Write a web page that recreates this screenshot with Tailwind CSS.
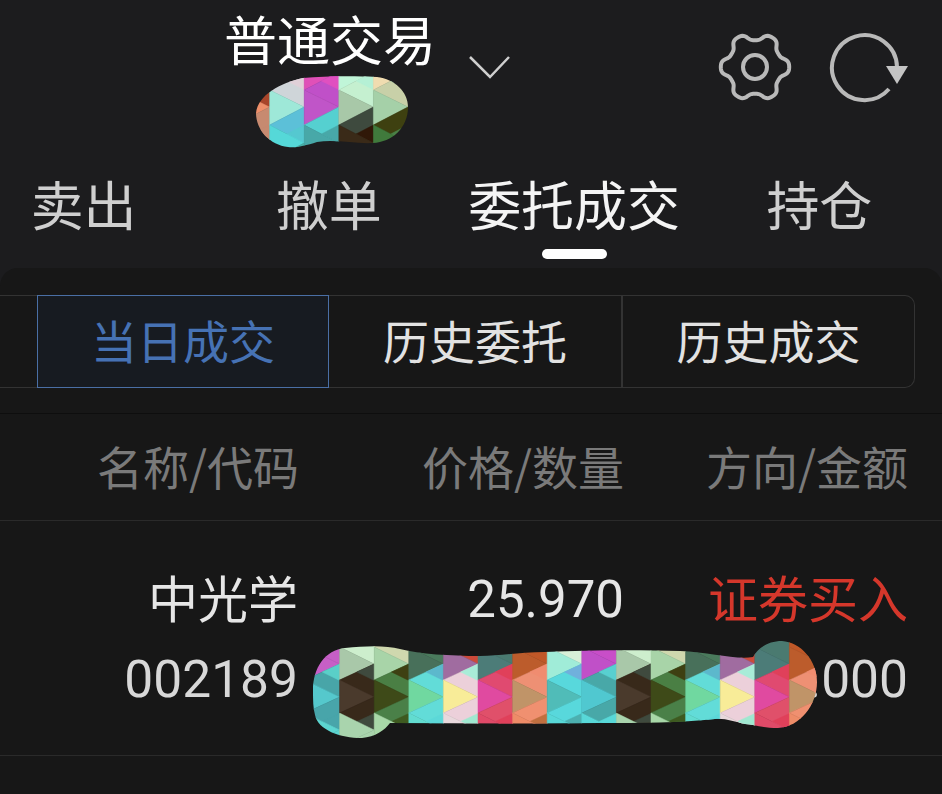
<!DOCTYPE html>
<html lang="zh">
<head>
  <meta charset="UTF-8">
  <title>普通交易</title>
  <script src="https://cdn.jsdelivr.net/npm/@tailwindcss/browser@4"></script>
</head>
<body class="relative w-[942px] h-[794px] overflow-hidden bg-[#1c1c1e] font-['Noto_Sans_CJK_SC','Noto_Sans',sans-serif]">

  <!-- HEADER -->
  <header class="flex h-[160px]">
    <div class="ml-[224px] mt-[7px] text-[53px] leading-[62px] text-white">普通交易</div>
    <svg class="ml-[32px] mt-[55px]" width="42" height="24" viewBox="0 0 42 24" fill="none" stroke="#cfcfcf" stroke-width="2.5"><path d="M2 2l20 20L41 2"/></svg>
    <svg class="ml-[206px] mt-[30px]" width="78" height="74" viewBox="-39 -37 78 74" fill="none" stroke="#b9b9b9" stroke-width="4">
      <path id="gear"/>
      <circle r="12"/>
    </svg>
    <svg class="ml-[33px] mt-[30px]" width="82" height="76" viewBox="828 29 82 76" fill="none">
      <path d="M898 66A32.5 32.5 0 1 0 890 88" stroke="#b9b9b9" stroke-width="4"/>
      <path d="M887 65H909L898 83Z" fill="#c4c4c4"/>
    </svg>
  </header>

  <!-- TABS -->
  <nav class="relative flex -ml-[39px] h-[108px] text-[53px] text-[#cfcfcf]">
    <div class="w-[245.3px] pt-[12px] leading-[62px] text-center">卖出</div>
    <div class="w-[245.3px] pt-[12px] leading-[62px] text-center">撤单</div>
    <div class="w-[245.3px] pt-[12px] leading-[62px] text-center text-[#f4f4f4] whitespace-nowrap">委托成交</div>
    <div class="w-[245.3px] pt-[12px] leading-[62px] text-center">持仓</div>
    <span class="absolute left-[581px] top-[89px] w-[65px] h-[10px] rounded-full bg-white"></span>
  </nav>

  <!-- PANEL -->
  <main class="h-[526px] bg-[#171717] rounded-t-[18px]">
    <div class="h-[146px] pt-[27px] border-b border-[#0e0e0e]">
      <div class="flex h-[93px] w-[915px] rounded-r-[10px] border border-l-0 border-[#333333] text-[46px] text-[#e2e2e2]">
        <div class="w-[37px]"></div>
        <div class="w-[292px] -my-px border border-[#4a6fa5] bg-[#171b21] text-[#4672b4] flex items-center justify-center pb-[4px]">当日成交</div>
        <div class="w-[292px] flex items-center justify-center pb-[4px]">历史委托</div>
        <div class="flex-1 border-l-2 border-[#333333] flex items-center justify-center pb-[4px]">历史成交</div>
      </div>
    </div>

    <div class="flex h-[107px] pb-[4px] border-b border-[#2a2a2a] items-center text-[46px] text-[#7a7a7a] text-right">
      <div class="w-[299px]">名称/代码</div>
      <div class="w-[325px]">价格/数量</div>
      <div class="w-[284px]">方向/金额</div>
    </div>

    <div class="flex h-[235px] border-b border-[#2a2a2a] text-right font-['Roboto','Noto_Sans_CJK_SC',sans-serif] text-[#e6e6e6]">
      <div class="w-[298px] pt-[47px]">
        <div class="h-[80px] -mt-[4px] mb-[4px] leading-[64px] text-[50px] font-['Noto_Sans_CJK_SC',sans-serif]">中光学</div>
        <div class="h-[80px] leading-[64px] text-[51.5px] text-[#d8d8d8]">002189</div>
      </div>
      <div class="w-[326px] pt-[47px]">
        <div class="h-[80px] leading-[64px] text-[51px]">25.970</div>
      </div>
      <div class="w-[284px] pt-[47px]">
        <div class="h-[80px] -mt-[4px] mb-[4px] leading-[64px] text-[50px] text-[#d5372b] font-['Noto_Sans_CJK_SC',sans-serif]">证券买入</div>
        <div class="h-[80px] leading-[64px] text-[51.5px] text-[#d8d8d8]">.000</div>
      </div>
    </div>
  </main>

  <!-- scribbled-out parts of the screenshot -->
  <svg id="scribble" class="absolute left-0 top-0" width="942" height="794" viewBox="0 0 942 794">
    <defs>
      <clipPath id="blobTop"><path d="M256 113C258 95 280 83 303 78C325 76 355 76 377 77C395 79 408 92 408 107C408 128 392 142 373 143C355 144 335 139 317 142C305 146 295 148 288 147C270 145 256 130 256 113Z"/></clipPath>
      <clipPath id="blobBottom"><path d="M313 690C313 668 325 650 345 648C365 646 385 645 400 649C420 654 450 656 480 656C500 656 520 652 545 652C590 650 640 650 680 651C710 652 735 660 753 657C758 648 768 641 782 641C800 642 817 660 817 682C817 705 800 727 778 728C765 728 755 725 745 724C735 722 725 718 715 719C680 723 640 723 600 723C530 724 460 723 390 723C385 730 375 737 362 738C340 738 318 730 315 715C313 708 313 700 313 690Z"/></clipPath>
    </defs>
    <g id="mosaicTop" clip-path="url(#blobTop)"></g>
    <g id="mosaicBottom" clip-path="url(#blobBottom)"></g>
  </svg>

  <script>
    // gear outline, sampled around the centre
    const gearPts = [];
    for (let i = 0; i < 180; i++) {
      const t = i * Math.PI / 90;
      const r = 30.5 + 3.7 * Math.tanh(1.5 * Math.cos(6 * t)) / Math.tanh(1.5);
      gearPts.push((r * Math.cos(t)).toFixed(2) + " " + (r * Math.sin(t)).toFixed(2));
    }
    document.getElementById("gear").setAttribute("d", "M" + gearPts.join("L") + "Z");

    // colours per column: top, upper-left, upper-right corner, upper-right, centre, lower-right, lower-right corner, lower-left, bottom
    const BROWN = ["#cdeecd","#a9c8a9","#3f4a3e","#38291a","#4a3a2c","#38291a","#3f4a3e","#a9d4ad","#a9d4ad"];
    const GREEN = ["#cfd8ae","#a8d4a8","#3e4012","#4a7f44","#3e4a18","#4a8048","#3e5a20","#a8d8a8","#4a7a40"];
    const MINT = ["#4a7a5c","#48705a","#5cb8cc","#62dcd8","#70d8a0","#62dcd8","#5cd8d8","#62dcd0","#3e7a50"];
    const PINK = ["#cc4a3a","#a06ca0","#a8ecd8","#ecd0da","#f8ec98","#ecd0da","#a0e8d0","#e8d8dc","#e04a70"];
    const RED = ["#4a7a70","#4c7c78","#e0405a","#e04a70","#e04aa0","#e0506a","#e0405a","#e04a68","#408070"];
    const TAN = ["#c05828","#bc5c2c","#f08c70","#ee9074","#c09468","#f09070","#c07040","#ee8c68","#c86838"];
    const CYAN = ["#d8f0d8","#a0ecd8","#70b0dc","#58d8dc","#50bcb8","#58d8dc","#4cb0b0","#58d8d8","#a0ecd0"];
    const PURPLE = ["#c84ec8","#c050c8","#58d0d0","#48a8a8","#50c8d0","#48a8a8","#58d8d8","#58d8d8","#c050b0"];

    const drawTile = (x, w, ys, c) => {
      const [a, b, cc, d, e, f, g] = ys, R = x + w;
      const mid = (p, q) => [(p[0] + q[0]) / 2, (p[1] + q[1]) / 2];
      const Lb = [x, b], Lc = [x, cc], Re = [R, e], Rf = [R, f], Rg = [R, g];
      const m1 = mid(Lb, Re), m2 = mid(Re, Rf), m3 = mid(Lc, Rg), m4 = mid(Rf, Rg);
      const tris = [
        [[[x, a - 40], [R, a - 40], Re, [x, a]], c[0]],
        [[[x, a], Re, Lb], c[1]],
        [[Lb, Re, Rf], c[3]],
        [[m1, Re, m2], c[2]],
        [[Lb, Rf, Lc], c[4]],
        [[Lc, Rf, Rg], c[5]],
        [[m3, Rg, m4], c[6]],
        [[Lc, Rg, [x, d]], c[7]],
        [[[x, d], Rg, [R, d + 40], [x, d + 40]], c[8]],
      ];
      return tris.map(([p, fill]) => `<polygon points="${p.map(q => q.join(",")).join(" ")}" fill="${fill}" stroke="${fill}" stroke-width="0.5"/>`).join("");
    };

    // top blob
    const topCols = [
      ["#b8321f","#b8321f","#a8452a","#a8452a","#ee8f6a","#c78a70","#c78a70","#c78a70","#c78a70"],
      ["#b5d8b5","#f0d0dc","#e0d0d8","#cfd5d9","#9ee8d8","#5cc0d8","#55c8d0","#55d8d8","#48b0a8"],
      ["#7a6a40","#e050b8","#e050c0","#c050c8","#c055c8","#55d0d0","#48a8a8","#48a8a8","#50d0d8"],
      ["#c87aa0","#c0f5d8","#b5f0d5","#c5f0d0","#a8c8a8","#3e4a3e","#301808","#3a2a18","#4a3a2c"],
      ["#88d8c0","#f0dcb0","#a8d8b8","#c8d0a8","#a5d0a8","#3e4010","#4a8048","#407a3c","#3e4a18"],
    ];
    document.getElementById("mosaicTop").innerHTML = topCols.map((c, i) =>
      drawTile(235 + i * 34.6, 34.6, [54, 90, 125, 161, 72, 107, 143], c)).join("");

    // bottom blob
    const leftCol = ["#c65fc6","#c65fc6","#5acfc8","#48a5a8","#55c8cc","#48a5aa","#48a5aa","#5cd5d0","#5cd5d0"];
    const bottomCols = [leftCol, BROWN, GREEN, MINT, PINK, RED, TAN, CYAN, PURPLE, BROWN, GREEN, MINT, PINK, RED, TAN];
    document.getElementById("mosaicBottom").innerHTML = bottomCols.map((c, i) =>
      drawTile(305 + i * 34.6, 34.6, [647, 680, 713, 746, 664, 697, 730], c)).join("");
  </script>
</body>
</html>
